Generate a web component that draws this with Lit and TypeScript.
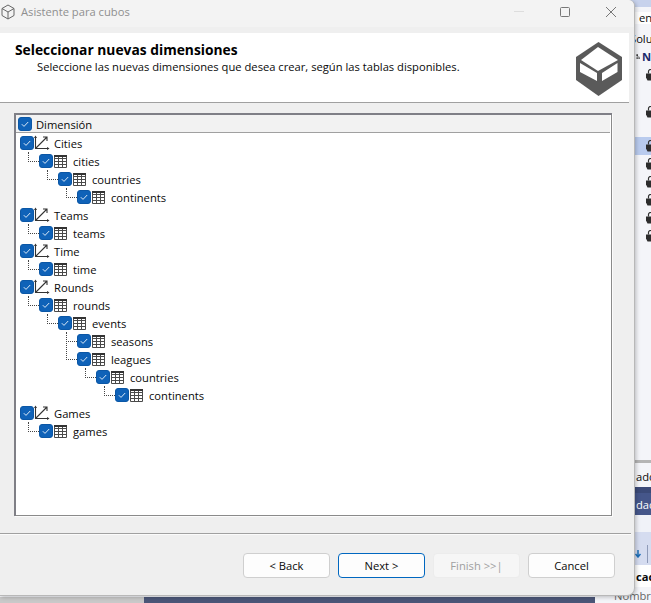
import { LitElement, html, css, svg } from 'lit';
import { customElement } from 'lit/decorators.js';

interface TreeRow {
  label: string;
  level: number;
  kind: 'measure' | 'table';
}

const ROWS: TreeRow[] = [
  { label: 'Cities', level: 0, kind: 'measure' },
  { label: 'cities', level: 1, kind: 'table' },
  { label: 'countries', level: 2, kind: 'table' },
  { label: 'continents', level: 3, kind: 'table' },
  { label: 'Teams', level: 0, kind: 'measure' },
  { label: 'teams', level: 1, kind: 'table' },
  { label: 'Time', level: 0, kind: 'measure' },
  { label: 'time', level: 1, kind: 'table' },
  { label: 'Rounds', level: 0, kind: 'measure' },
  { label: 'rounds', level: 1, kind: 'table' },
  { label: 'events', level: 2, kind: 'table' },
  { label: 'seasons', level: 3, kind: 'table' },
  { label: 'leagues', level: 3, kind: 'table' },
  { label: 'countries', level: 4, kind: 'table' },
  { label: 'continents', level: 5, kind: 'table' },
  { label: 'Games', level: 0, kind: 'measure' },
  { label: 'games', level: 1, kind: 'table' },
];

const checkbox = html`<svg class="check" width="14" height="14" viewBox="0 0 14 14">
  <rect x="0.5" y="0.5" width="13" height="13" rx="2.5" fill="#0f62b8" stroke="#0b57a6"></rect>
  <path d="M3.8 7.2l2.2 2.2 4.2-4.4" fill="none" stroke="#dbe9f7" stroke-width="1"></path>
</svg>`;

const measureIcon = svg`<path d="M1.5 2v11.5H14M1.5 13.5L12.5 2.5M9 2h4v4" fill="none" stroke="#333" stroke-width="1.1"></path><path d="M0 3l1.5-2.5L3 3zM13 12l2.5 1.5L13 15z" fill="#333"></path>`;
const tableIcon = svg`<path d="M1.5 2.5h12v12h-12zM1.5 5.5h12M1.5 8.5h12M1.5 11.5h12M5.500 2.500v12M9.500 2.500v12" fill="none" stroke="#4a4a4a" stroke-width="1"></path><path d="M1 3h13" stroke="#333" stroke-width="2"></path>`;
const bagIcon = html`<svg class="bag" width="9" height="12" viewBox="0 0 9 12">
  <path d="M2.500 4.500V2.500a2 2 0 014 0v2" fill="none" stroke="#333" stroke-width="1.2"></path>
  <path d="M0 4.500h9v4l-1.500 3h-6L0 8.500z" fill="#2d2d2d"></path>
</svg>`;

const BAG_ROWS = [66, 103, 137, 155, 173, 191, 209, 227];

@customElement('app-root')
export class AppRoot extends LitElement {
  static styles = css`
    :host {
      display: block;
      position: relative;
      width: 651px;
      height: 603px;
      overflow: hidden;
      background: #f4f5f9;
      font-family: 'Open Sans', 'Noto Sans', sans-serif;
      font-size: 11.2px;
      color: #0a0a0a;
    }

    /* app behind the dialog, only its left edge shows */
    .behind {
      position: absolute;
      left: 600px;
      top: 0;
      width: 51px;
      height: 603px;
      overflow: hidden;
      white-space: nowrap;
      background: #f4f5f9;
    }
    .ribbon {
      height: 7px;
      background: #c7d2ec;
    }
    .tab {
      margin: 5px 0 6px;
      height: 12px;
      line-height: 12px;
      background: #fff;
      padding-left: 39px;
    }
    .pane-title {
      height: 17px;
      line-height: 17px;
      padding-left: 30px;
    }
    .solution {
      height: 19px;
      display: flex;
      align-items: center;
      padding-left: 36px;
      gap: 2px;
      font-weight: 700;
      color: #1a2a6c;
    }
    .bag {
      position: absolute;
      left: 46px;
    }
    .bag-row {
      position: absolute;
      left: 0;
      width: 51px;
      height: 18px;
      display: flex;
      align-items: center;
    }
    .bag-row.sel {
      background: #b9cbee;
    }
    .footer {
      position: absolute;
      left: 0;
      top: 460px;
      width: 51px;
      display: flex;
      flex-direction: column;
    }
    .f-top {
      height: 3px;
      background: #b5b5b5;
    }
    .f-light {
      height: 24px;
      line-height: 28px;
      padding-left: 36px;
    }
    .f-band {
      height: 28px;
      box-sizing: border-box;
      background: #45568a;
      border-top: 6px solid #3b4a78;
      line-height: 24px;
      padding-left: 36px;
      color: #fff;
    }
    .f-gap {
      height: 17px;
      background: #f0f2f8;
    }
    .f-tool {
      height: 33px;
      background: #d5dcf0;
      position: relative;
    }
    .f-tool svg {
      position: absolute;
      left: 35px;
      top: 18px;
    }
    .f-tool i {
      position: absolute;
      left: 47px;
      top: 13px;
      width: 1px;
      height: 18px;
      background: #8e9ab8;
    }
    .f-loc {
      height: 22px;
      line-height: 24px;
      padding-left: 36px;
      background: #fff;
      font-weight: 700;
    }
    .f-name {
      height: 15px;
      line-height: 17px;
      padding-left: 14px;
      color: #666;
      background: #f4f5f9;
    }
    .strip {
      position: absolute;
      left: 0;
      top: 597px;
      width: 595px;
      height: 6px;
      display: flex;
    }
    .strip i {
      display: block;
      width: 144px;
      background: #c9c9c9;
    }
    .strip b {
      display: block;
      flex: 1;
      background: #4b5678;
    }

    .window {
      position: absolute;
      left: 0;
      top: 0;
      width: 635px;
      height: 596px;
      box-sizing: border-box;
      background: #efefef;
      border-right: 1px solid #b8b8b8;
      border-bottom: 1px solid #b8b8b8;
      border-top-right-radius: 6px;
      border-bottom-right-radius: 8px;
      display: flex;
      flex-direction: column;
      box-shadow: 1px 1px 4px rgba(0, 0, 0, 0.25);
    }
    .titlebar {
      height: 27px;
      box-sizing: border-box;
      padding-bottom: 4px;
      background: #f3f3f3;
      border-top-right-radius: 6px;
      display: flex;
      align-items: center;
      color: #8f8f8f;
      flex: none;
    }
    .titlebar .app {
      margin: 0 6px 0 1px;
    }
    .titlebar .caption {
      flex: 1;
    }
    .titlebar .ctl {
      width: 46px;
      height: 23px;
      display: flex;
      align-items: center;
      justify-content: center;
    }
    .header {
      margin-top: 6px;
      width: 629px;
      height: 70px;
      box-sizing: border-box;
      background: #fff;
      border-bottom: 1px solid #a0a0a0;
      display: flex;
      flex: none;
      justify-content: space-between;
    }
    .header h1 {
      margin: 8px 0 0 15px;
      font-size: 13.8px;
      line-height: 18px;
      font-weight: 700;
      color: #000;
    }
    .header p {
      margin: 0 0 0 37px;
      line-height: 16px;
    }
    .logo {
      margin: 9px 7px 0 0;
    }
    .content {
      padding: 10px 0 0 14px;
      flex: none;
    }
    .panel {
      width: 598px;
      height: 403px;
      box-sizing: border-box;
      background: #fff;
      box-shadow: inset 2px 2px 0 #7f7f86, inset -1px -1px 0 #8a8a8a, 1px 1px 0 #fbfbfb;
      padding: 2px 2px 0 2px;
    }
    .col-head {
      height: 18px;
      background: #f2f2f2;
      border-bottom: 1px solid #a0a0a0;
      box-sizing: border-box;
      display: flex;
      align-items: center;
      gap: 4px;
      padding-left: 2px;
    }
    .col-head span {
      position: relative;
      top: 1px;
    }
    .rows {
      padding: 1px 0 0 1px;
    }
    .row {
      position: relative;
      height: 18px;
      display: flex;
      align-items: center;
    }
    .row .indent {
      flex: none;
    }
    .row .check {
      flex: none;
      margin-left: 3px;
      position: relative;
    }
    .row .icon {
      flex: none;
      margin-left: 0;
    }
    .row .label {
      margin-left: 4px;
    }
    .link {
      position: absolute;
      width: 11px;
      box-sizing: border-box;
      border-left: 1px dotted #444;
      border-bottom: 1px dotted #444;
    }
    .rule {
      margin-top: 17px;
      width: 631px;
      border-top: 1px solid #a0a0a0;
      border-bottom: 1px solid #fbfbfb;
      flex: none;
    }
    .buttons {
      display: flex;
      gap: 8px;
      padding: 18px 0 0 243px;
    }
    button {
      width: 87px;
      height: 25px;
      box-sizing: border-box;
      font: inherit;
      color: #0a0a0a;
      background: #fdfdfd;
      border: 1px solid #cfcfcf;
      border-radius: 4px;
      padding: 0;
    }
    button.primary {
      border-color: #0067c0;
    }
    button[disabled] {
      color: #a0a0a0;
      background: #f6f6f6;
      border-color: #ececec;
    }
  `;

  // height of the dotted elbow: reaches up to the row of the parent
  linkHeight(index: number) {
    const level = ROWS[index].level;
    let up = index - 1;
    while (up >= 0 && ROWS[up].level >= level) up--;
    return 18 * (index - up) - 8;
  }

  renderRow(row: TreeRow, index: number) {
    const indent = row.level * 19;
    const linkH = this.linkHeight(index);
    return html`<div class="row">
      ${row.level > 0
        ? html`<span
            class="link"
            style="left: ${indent - 8}px; top: ${10 - linkH}px; height: ${linkH}px"
          ></span>`
        : ''}
      <span class="indent" style="width: ${indent}px"></span>
      ${checkbox}
      <svg class="icon" width="16" height="16" viewBox="0 0 16 16">
        ${row.kind === 'measure' ? measureIcon : tableIcon}
      </svg>
      <span class="label">${row.label}</span>
    </div>`;
  }

  render() {
    return html`
      <div class="behind">
        <div class="ribbon"></div>
        <div class="tab">en</div>
        <div class="pane-title">Solu</div>
        <div class="solution">
          <svg width="10" height="13" viewBox="0 0 10 13">
            <path d="M1 1h4v4H1zM1 9h4v3H1zM6 9h4v3H6z" fill="#333"></path>
            <path d="M3 5v4M3 7h5v2" fill="none" stroke="#333"></path>
          </svg>
          <span>N</span>
        </div>
        ${BAG_ROWS.map(
          (top, i) => html`<div class="bag-row ${i === 2 ? 'sel' : ''}" style="top: ${top}px">${bagIcon}</div>`
        )}
        <div class="footer">
          <div class="f-top"></div>
          <div class="f-light">ado</div>
          <div class="f-band">dac</div>
          <div class="f-gap"></div>
          <div class="f-tool">
            <svg width="6" height="8" viewBox="0 0 6 8"><path d="M3 0v6M0.500 4L3 7l2.500-3" fill="none" stroke="#1c6fb8" stroke-width="1.500"></path></svg>
            <i></i>
          </div>
          <div class="f-loc">cac</div>
          <div class="f-name">Nombre</div>
        </div>
      </div>
      <div class="strip"><i></i><b></b></div>

      <div class="window">
        <div class="titlebar">
          <svg class="app" width="14" height="16" viewBox="0 0 14 16">
            <path d="M7 1l6 3.500v7L7 15l-6-3.500v-7zM1 4.500L7 8l6-3.500M7 8v7" fill="none" stroke="#666"></path>
          </svg>
          <span class="caption">Asistente para cubos</span>
          <span class="ctl">
            <svg width="12" height="2"><path d="M1 .5h10" stroke="#ddd"></path></svg>
          </span>
          <span class="ctl">
            <svg width="12" height="12"><rect x="1.500" y="1.500" width="9" height="9" rx="1" fill="none" stroke="#777"></rect></svg>
          </span>
          <span class="ctl">
            <svg width="12" height="12"><path d="M1 1l10 10M11 1L1 11" stroke="#777"></path></svg>
          </span>
        </div>
        <div class="header">
          <div>
            <h1>Seleccionar nuevas dimensiones</h1>
            <p>Seleccione las nuevas dimensiones que desea crear, según las tablas disponibles.</p>
          </div>
          <svg class="logo" width="46" height="54" viewBox="0 0 46 54">
            <path d="M22.500 0L46 15v23L22.500 54 0 38V15z" fill="#5a5a5a"></path>
            <path d="M22 5l20 13-20 11L5 18z" fill="#fff"></path>
            <path d="M4 21l17 10v8L4 30zM26 31l15.500-10v9L26 39z" fill="#fff"></path>
          </svg>
        </div>
        <div class="content">
          <div class="panel">
            <div class="col-head">${checkbox}<span>Dimensión</span></div>
            <div class="rows">${ROWS.map((r, i) => this.renderRow(r, i))}</div>
          </div>
        </div>
        <div class="rule"></div>
        <div class="buttons">
          <button>&lt; Back</button>
          <button class="primary">Next &gt;</button>
          <button disabled>Finish &gt;&gt;|</button>
          <button>Cancel</button>
        </div>
      </div>
    `;
  }
}
